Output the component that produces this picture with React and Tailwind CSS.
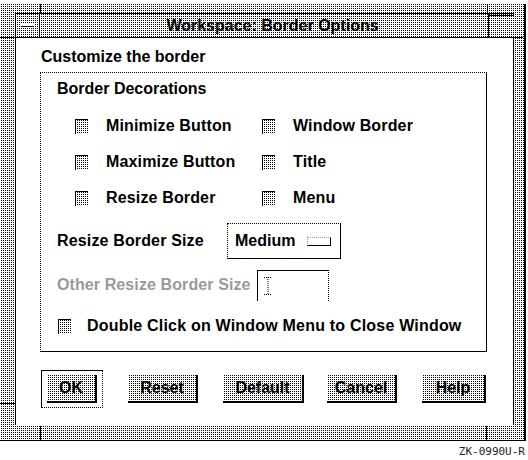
const DOT = "bg-[conic-gradient(#000_0_25%,#fff_0_100%)] bg-size-[2px_2px]";

function Check() {
  return (
    <div className={`w-[13px] h-[15px] shrink-0 border-t border-l border-black [border-left-style:dotted] ${DOT}`} />
  );
}

function Btn({ w, label, className = "" }) {
  return (
    <div
      className={`${w} h-[28px] flex items-center justify-center border-r-2 border-b-2 border-black ${DOT} text-[16px] font-bold leading-none ${className}`}
    >
      {label}
    </div>
  );
}

export default function App() {
  const items = [
    "Minimize Button",
    "Window Border",
    "Maximize Button",
    "Title",
    "Resize Border",
    "Menu",
  ];
  return (
    <div className="w-[528px] h-[460px] bg-white font-['Liberation_Sans',Arial,sans-serif] text-black overflow-hidden">
      <div className="h-[4px]" />
      <div className={`relative w-[526px] h-[437px] border-r-2 border-b border-black ${DOT} flex flex-col`}>
        {/* frame decorations */}
        <div className="absolute left-[40px] top-0 w-px h-[9px] bg-black" />
        <div className="absolute left-[487px] top-0 w-px h-[10px] bg-black" />
        <div className="absolute left-0 top-[33px] w-[15px] h-px bg-black" />
        <div className="absolute left-[513px] top-[33px] w-[10px] h-px bg-black" />
        <div className="absolute left-0 top-[399px] w-[15px] h-px bg-black" />
        <div className="absolute left-[40px] top-[422px] w-px h-[14px] bg-black" />
        <div className="absolute left-[486px] top-[422px] w-px h-[14px] bg-black" />

        {/* title bar */}
        <div className="mt-[9px] ml-[15px] w-[499px] h-[25px] flex border-t border-b border-black">
          <div className="w-[25px] h-full border-l border-r border-black flex items-center justify-center">
            <div className="w-[13px] h-[3px] bg-white border-b border-black" />
          </div>
          <div className="flex-1 flex items-center justify-center pl-[17px] text-[16px] font-bold leading-none">
            Workspace: Border Options
          </div>
          <div className="w-[26px] h-full border-l border-black">
            <div className="mt-px border-t border-black" />
          </div>
        </div>

        {/* client area */}
        <div className="ml-[15px] w-[499px] h-[387px] bg-white border-l border-r border-black flex flex-col">
          <div className="pt-[10px] pl-[25px] text-[16px] font-bold leading-[18px]">
            Customize the border
          </div>

          <div className="mt-[6px] ml-[24px] w-[447px] h-[280px] border border-black [border-top-style:dotted] [border-left-style:dotted] flex flex-col">
            <div className="pt-[7px] pl-[16px] text-[16px] font-bold leading-[18px]">
              Border Decorations
            </div>

            <div className="mt-[10px] pl-[34px] grid grid-cols-[187px_auto]">
              {items.map((t) => (
                <div key={t} className="h-[36px] flex items-center gap-[18px]">
                  <Check />
                  <span className="text-[16px] font-bold leading-[18px] tracking-[0.15px]">{t}</span>
                </div>
              ))}
            </div>

            <div className="mt-[7px] pl-[16px] h-[36px] grid grid-cols-[170px_114px] items-center">
              <div className="whitespace-nowrap text-[16px] font-bold leading-[18px] tracking-[0.15px]">
                Resize Border Size
              </div>
              <div className="h-[36px] border border-black [border-top-style:dotted] [border-left-style:dotted] flex items-center justify-between pl-[7px] pr-[9px]">
                <span className="text-[16px] font-bold leading-[18px]">Medium</span>
                <div className="w-[24px] h-[9px] border border-black [border-top-style:dotted] [border-left-style:dotted] border-t-[#999] border-l-[#999]" />
              </div>
            </div>

            <div className="mt-[10px] pl-[16px] h-[32px] grid grid-cols-[200px_72px] items-center">
              <div className="whitespace-nowrap text-[16px] font-bold leading-[18px] tracking-[0.1px] text-[#9a9a9a]">
                Other Resize Border Size
              </div>
              <div className="h-[31px] border-t border-l border-r border-black [border-right-style:dotted] flex items-center pl-[6px]">
                <svg width="8" height="18" viewBox="0 0 8 18">
                  <path d="M0 0.5H8M0 17.5H8M4 0V18" stroke="#000" strokeWidth="1" strokeDasharray="1 1" fill="none" />
                </svg>
              </div>
            </div>

            <div className="mt-[9px] pl-[17px] h-[32px] flex items-center gap-[16px]">
              <Check />
              <span className="text-[16px] font-bold leading-[18px] tracking-[0.2px]">
                Double Click on Window Menu to Close Window
              </span>
            </div>
          </div>

          {/* buttons */}
          <div className="mt-[18px] ml-[25px] flex items-start">
            <div className="w-[62px] h-[38px] border border-black [border-right-style:dotted] [border-bottom-style:dotted] pl-[5px] pt-[4px]">
              <Btn w="w-[50px]" label="OK" />
            </div>
            <Btn w="w-[70px]" label="Reset" className="mt-[5px] ml-[25px]" />
            <Btn w="w-[81px]" label="Default" className="mt-[5px] ml-[25px]" />
            <Btn w="w-[70px]" label="Cancel" className="mt-[5px] ml-[23px]" />
            <Btn w="w-[64px]" label="Help" className="mt-[5px] ml-[25px]" />
          </div>
        </div>
      </div>
      <div className="mt-[5px] pr-[3px] text-right font-['DejaVu_Sans_Mono',monospace] text-[11px] leading-[12px] text-[#222]">
        ZK-0990U-R
      </div>
    </div>
  );
}
